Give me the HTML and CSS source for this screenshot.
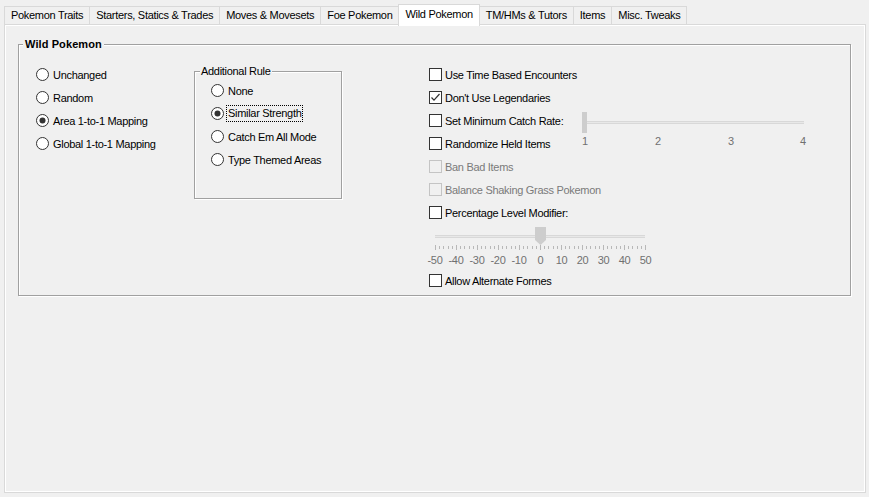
FILE: index.html
```html
<!DOCTYPE html>
<html>
<head>
<meta charset="utf-8">
<link rel="stylesheet" href="styles.css">
</head>
<body>
<div class="window">
  <div class="tabstrip">
    <div class="tab">Pokemon Traits</div>
    <div class="tab">Starters, Statics &amp; Trades</div>
    <div class="tab">Moves &amp; Movesets</div>
    <div class="tab">Foe Pokemon</div>
    <div class="tab active">Wild Pokemon</div>
    <div class="tab">TM/HMs &amp; Tutors</div>
    <div class="tab">Items</div>
    <div class="tab">Misc. Tweaks</div>
  </div>
  <div class="pane">
    <div class="group">
      <div class="group-title">Wild Pokemon</div>
      <div class="group-body">
        <div class="col-mode">
          <div class="row"><svg class="radio" viewBox="0 0 13 13"><circle cx="6.5" cy="6.5" r="6" /></svg><span>Unchanged</span></div>
          <div class="row"><svg class="radio" viewBox="0 0 13 13"><circle cx="6.5" cy="6.5" r="6" /></svg><span>Random</span></div>
          <div class="row"><svg class="radio" viewBox="0 0 13 13"><circle cx="6.5" cy="6.5" r="6" /><circle class="dot" cx="6.5" cy="6.5" r="3" /></svg><span>Area 1-to-1 Mapping</span></div>
          <div class="row"><svg class="radio" viewBox="0 0 13 13"><circle cx="6.5" cy="6.5" r="6" /></svg><span>Global 1-to-1 Mapping</span></div>
        </div>
        <div class="subgroup">
          <div class="subgroup-title">Additional Rule</div>
          <div class="row"><svg class="radio" viewBox="0 0 13 13"><circle cx="6.5" cy="6.5" r="6" /></svg><span>None</span></div>
          <div class="row"><svg class="radio" viewBox="0 0 13 13"><circle cx="6.5" cy="6.5" r="6" /><circle class="dot" cx="6.5" cy="6.5" r="3" /></svg><span class="focus">Similar Strength</span></div>
          <div class="row"><svg class="radio" viewBox="0 0 13 13"><circle cx="6.5" cy="6.5" r="6" /></svg><span>Catch Em All Mode</span></div>
          <div class="row"><svg class="radio" viewBox="0 0 13 13"><circle cx="6.5" cy="6.5" r="6" /></svg><span>Type Themed Areas</span></div>
        </div>
        <div class="opts">
          <div class="row wide"><svg class="check" viewBox="0 0 13 13"><rect x="0.5" y="0.5" width="12" height="12" /></svg><span>Use Time Based Encounters</span></div>
          <div class="row wide"><svg class="check" viewBox="0 0 13 13"><rect x="0.5" y="0.5" width="12" height="12" /><path class="tick" d="M2.5 6.5 L5 9.2 L10.5 3" /></svg><span>Don't Use Legendaries</span></div>
          <div class="row"><svg class="check" viewBox="0 0 13 13"><rect x="0.5" y="0.5" width="12" height="12" /></svg><span>Set Minimum Catch Rate:</span></div>
          <div class="catch-slider">
            <svg width="230" height="36" viewBox="0 0 230 36">
              <rect x="5" y="9" width="217" height="3" fill="#d8d8d8" />
              <rect x="5" y="10" width="217" height="1" fill="#e8e8e8" />
              <rect x="0" y="0" width="5" height="21" fill="#cdcdcd" />
              <text class="scale" x="3" y="33">1</text>
              <text class="scale" x="76" y="33">2</text>
              <text class="scale" x="149" y="33">3</text>
              <text class="scale" x="221" y="33">4</text>
            </svg>
          </div>
          <div class="row"><svg class="check" viewBox="0 0 13 13"><rect x="0.5" y="0.5" width="12" height="12" /></svg><span>Randomize Held Items</span></div>
          <div class="row wide disabled"><svg class="check" viewBox="0 0 13 13"><rect x="0.5" y="0.5" width="12" height="12" /></svg><span>Ban Bad Items</span></div>
          <div class="row wide disabled"><svg class="check" viewBox="0 0 13 13"><rect x="0.5" y="0.5" width="12" height="12" /></svg><span>Balance Shaking Grass Pokemon</span></div>
          <div class="row wide"><svg class="check" viewBox="0 0 13 13"><rect x="0.5" y="0.5" width="12" height="12" /></svg><span>Percentage Level Modifier:</span></div>
          <div class="level-slider">
            <svg width="240" height="45" viewBox="0 0 240 45">
              <rect x="6" y="11" width="210" height="3" fill="#d8d8d8" />
              <rect x="6" y="12" width="210" height="1" fill="#e8e8e8" />
              <g class="ticks">
                <path d="M6.5 21v5M27.5 21v5M48.5 21v5M69.5 21v5M90.5 21v5M111.5 21v5M132.5 21v5M153.5 21v5M174.5 21v5M195.5 21v5M216.5 21v5" />
                <path d="M10.5 22v3M14.5 22v3M19.5 22v3M23.5 22v3M31.5 22v3M35.5 22v3M40.5 22v3M44.5 22v3M52.5 22v3M56.5 22v3M61.5 22v3M65.5 22v3M73.5 22v3M77.5 22v3M82.5 22v3M86.5 22v3M94.5 22v3M98.5 22v3M103.5 22v3M107.5 22v3M115.5 22v3M119.5 22v3M124.5 22v3M128.5 22v3M136.5 22v3M140.5 22v3M145.5 22v3M149.5 22v3M157.5 22v3M161.5 22v3M166.5 22v3M170.5 22v3M178.5 22v3M182.5 22v3M187.5 22v3M191.5 22v3M199.5 22v3M203.5 22v3M208.5 22v3M212.5 22v3" />
              </g>
              <polygon points="106,3 117,3 117,16 111.5,21 106,16" fill="#cdcdcd" />
              <text class="scale" x="6" y="40">-50</text>
              <text class="scale" x="27" y="40">-40</text>
              <text class="scale" x="48" y="40">-30</text>
              <text class="scale" x="69" y="40">-20</text>
              <text class="scale" x="90" y="40">-10</text>
              <text class="scale" x="111.5" y="40">0</text>
              <text class="scale" x="132.5" y="40">10</text>
              <text class="scale" x="153.5" y="40">20</text>
              <text class="scale" x="174.5" y="40">30</text>
              <text class="scale" x="195.5" y="40">40</text>
              <text class="scale" x="216.5" y="40">50</text>
            </svg>
          </div>
          <div class="row wide"><svg class="check" viewBox="0 0 13 13"><rect x="0.5" y="0.5" width="12" height="12" /></svg><span>Allow Alternate Formes</span></div>
        </div>
      </div>
    </div>
  </div>
</div>
</body>
</html>
```
FILE: styles.css
```css
* { box-sizing: border-box; }
html, body { margin: 0; padding: 0; }
body {
  background: #f0f0f0;
  font-family: "Liberation Sans", Arial, sans-serif;
  font-size: 11px;
  letter-spacing: -0.3px;
  color: #000;
  width: 869px;
  height: 497px;
  overflow: hidden;
}
.window {
  height: 497px;
  padding: 0 3px 4px 4px;
  display: flex;
  flex-direction: column;
}
.tabstrip {
  height: 24px;
  display: flex;
  align-items: flex-end;
  position: relative;
  z-index: 2;
  flex: none;
}
.tab {
  height: 18px;
  line-height: 16px;
  padding: 0 6px 0 6px;
  border: 1px solid #d9d9d9;
  border-bottom: none;
  margin-left: -1px;
  background: #f0f0f0;
  white-space: nowrap;
}
.tab:first-child { margin-left: 0; }
.tab.active {
  height: 22px;
  line-height: 18px;
  margin-bottom: -2px;
  background: #fff;
  position: relative;
  z-index: 3;
}
.pane {
  flex: 1;
  border: 1px solid #d9d9d9;
  box-shadow: inset 0 0 0 1px #fff;
  padding: 19px 14px 0 13px;
  position: relative;
  z-index: 1;
}
.group {
  position: relative;
  border: 1px solid #a0a0a0;
  box-shadow: 1px 1px 0 #fff, inset 1px 1px 0 #fff;
  padding: 0 0 3px 0;
}
.group-title {
  position: absolute;
  top: -7px;
  left: 4px;
  padding: 0 2px;
  line-height: 13px;
  font-weight: bold;
  letter-spacing: 0.1px;
  background: #f0f0f0;
}
.group-body {
  display: flex;
  align-items: flex-start;
  padding: 18px 0 0 17px;
}
.row {
  height: 23px;
  display: flex;
  align-items: center;
  white-space: nowrap;
}
.col-mode { width: 158px; flex: none; }
.radio {
  width: 13px;
  height: 13px;
  margin-right: 4px;
  flex: none;
}
.radio circle { fill: #fff; stroke: #333; stroke-width: 1; }
.radio circle.dot { fill: #333; stroke: none; }
.subgroup {
  position: relative;
  width: 148px;
  height: 128px;
  margin-top: 8px;
  flex: none;
  border: 1px solid #a0a0a0;
  box-shadow: 1px 1px 0 #fff, inset 1px 1px 0 #fff;
  padding: 7px 0 0 16px;
}
.subgroup-title {
  position: absolute;
  top: -7px;
  left: 5px;
  padding: 0 1px;
  line-height: 13px;
  background: #f0f0f0;
}
.focus {
  outline: 1px dotted #000;
  outline-offset: 0;
  line-height: 15px;
  padding: 0 1px;
  margin-left: -1px;
}
.opts {
  margin-left: 87px;
  display: grid;
  grid-template-columns: 153px 230px;
  grid-template-rows: repeat(7, 23px) 45px 23px;
}
.opts .wide, .opts .level-slider { grid-column: 1 / -1; }
.check {
  width: 13px;
  height: 13px;
  margin-right: 3px;
  flex: none;
}
.check rect { fill: #fff; stroke: #333; stroke-width: 1; }
.check .tick { fill: none; stroke: #333; stroke-width: 1.2; }
.disabled { color: #7a7a7a; }
.disabled .check rect { fill: #f0f0f0; stroke: #c4c4c4; }
.catch-slider {
  grid-column: 2;
  grid-row: 3 / span 2;
  padding-top: 3px;
}
.catch-slider svg, .level-slider svg { display: block; overflow: visible; }
.scale {
  font-family: "Liberation Sans", Arial, sans-serif;
  font-size: 11px;
  letter-spacing: -0.3px;
  fill: #707070;
  text-anchor: middle;
}
.ticks path { stroke: #b8b8b8; stroke-width: 1; fill: none; }
```
